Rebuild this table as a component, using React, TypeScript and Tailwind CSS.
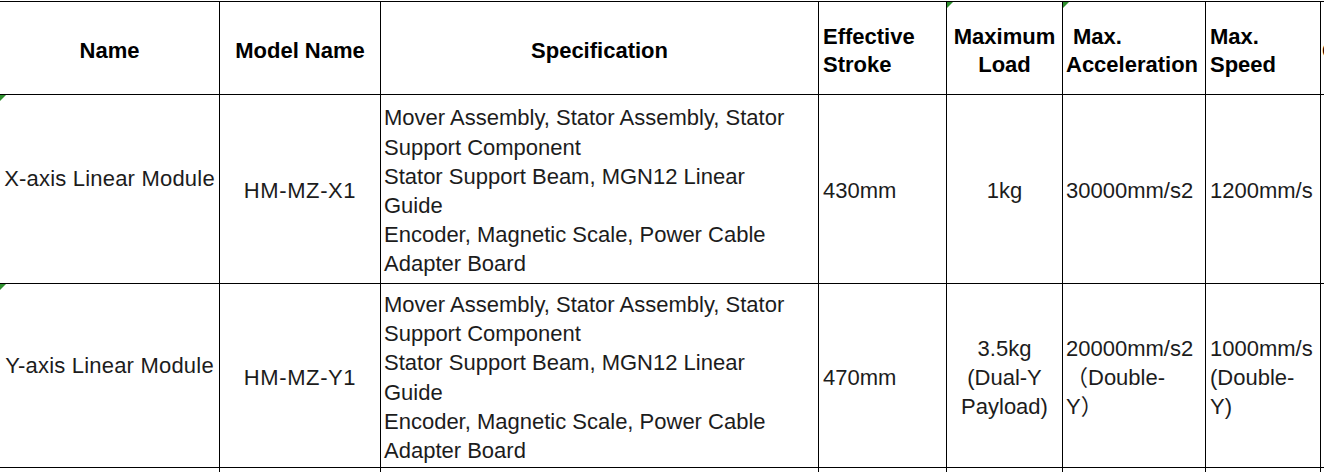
import React from "react";

type CellProps = {
  children?: React.ReactNode;
  center?: boolean;
  flag?: boolean;
  className?: string;
};

// spreadsheet cell, white on the black grid gap
function Cell({ children, center, flag, className = "" }: CellProps) {
  return (
    <div
      className={`relative bg-white flex items-center overflow-hidden whitespace-nowrap ${
        center ? "justify-center text-center" : "justify-start text-left"
      } ${className}`}
    >
      {flag && (
        <span className="absolute top-0 left-0 w-0 h-0 border-t-[6px] border-t-[#2f8f2f] border-r-[6px] border-r-transparent" />
      )}
      <div>{children}</div>
    </div>
  );
}

const specLines = [
  "Mover Assembly, Stator Assembly, Stator",
  "Support Component",
  "Stator Support Beam, MGN12 Linear",
  "Guide",
  "Encoder, Magnetic Scale, Power Cable",
  "Adapter Board",
];

function Lines({ items }: { items: string[] }) {
  return (
    <>
      {items.map((t, i) => (
        <div key={i}>{t}</div>
      ))}
    </>
  );
}

export default function App() {
  const head = "font-bold text-black text-[22px] leading-[28px] pt-[6px]";
  const body = "text-[#1c1c1c] text-[22px] leading-[29.2px] pt-1";

  return (
    <div
      className="w-[1324px] h-[472px] bg-white overflow-hidden pt-px"
      style={{ fontFamily: '"Liberation Sans", "Noto Sans CJK SC", Arial, sans-serif' }}
    >
      <div className="grid grid-cols-[219px_160px_437px_127px_115px_142px_114px_60px] grid-rows-[92px_188px_183px_40px] gap-px pt-px bg-black w-max">
        {/* ===== Header ===== */}
        <Cell center className={head}>Name</Cell>
        <Cell center className={head}>Model Name</Cell>
        <Cell center className={head}>Specification</Cell>
        <Cell className={`${head} pl-1`}>
          <Lines items={["Effective", "Stroke"]} />
        </Cell>
        <Cell center flag className={head}>
          <Lines items={["Maximum", "Load"]} />
        </Cell>
        <Cell flag className={`${head} pl-[3px]`}>
          <div className="pl-[7px]">Max.</div>
          <div>Acceleration</div>
        </Cell>
        <Cell className={`${head} pl-1`}>
          <Lines items={["Max.", "Speed"]} />
        </Cell>
        <Cell className={`${head} pl-px`}>Color</Cell>

        {/* ===== X axis ===== */}
        <Cell center flag className={`${body} pb-6 tracking-[0.2px]`}>X-axis Linear Module</Cell>
        <Cell center className={`${body} tracking-[0.6px]`}>HM-MZ-X1</Cell>
        <Cell className={`${body} pl-[3px]`}>
          <Lines items={specLines} />
        </Cell>
        <Cell className={`${body} pl-1`}>430mm</Cell>
        <Cell center className={body}>1kg</Cell>
        <Cell className={`${body} pl-[3px]`}>30000mm/s2</Cell>
        <Cell className={`${body} pl-1`}>1200mm/s</Cell>
        <Cell className={body} />

        {/* ===== Y axis ===== */}
        <Cell center flag className={`${body} pb-6 tracking-[0.2px]`}>Y-axis Linear Module</Cell>
        <Cell center className={`${body} tracking-[0.6px]`}>HM-MZ-Y1</Cell>
        <Cell className={`${body} pl-[3px]`}>
          <Lines items={specLines} />
        </Cell>
        <Cell className={`${body} pl-1`}>470mm</Cell>
        <Cell center className={body}>
          <Lines items={["3.5kg", "(Dual-Y", "Payload)"]} />
        </Cell>
        <Cell className={`${body} pl-[3px]`}>
          <Lines items={["20000mm/s2", "（Double-", "Y）"]} />
        </Cell>
        <Cell className={`${body} pl-1`}>
          <Lines items={["1000mm/s", "(Double-", "Y)"]} />
        </Cell>
        <Cell className={body} />

        {/* next row, cut off */}
        <Cell />
        <Cell />
        <Cell />
        <Cell />
        <Cell />
        <Cell />
        <Cell />
        <Cell />
      </div>
    </div>
  );
}
